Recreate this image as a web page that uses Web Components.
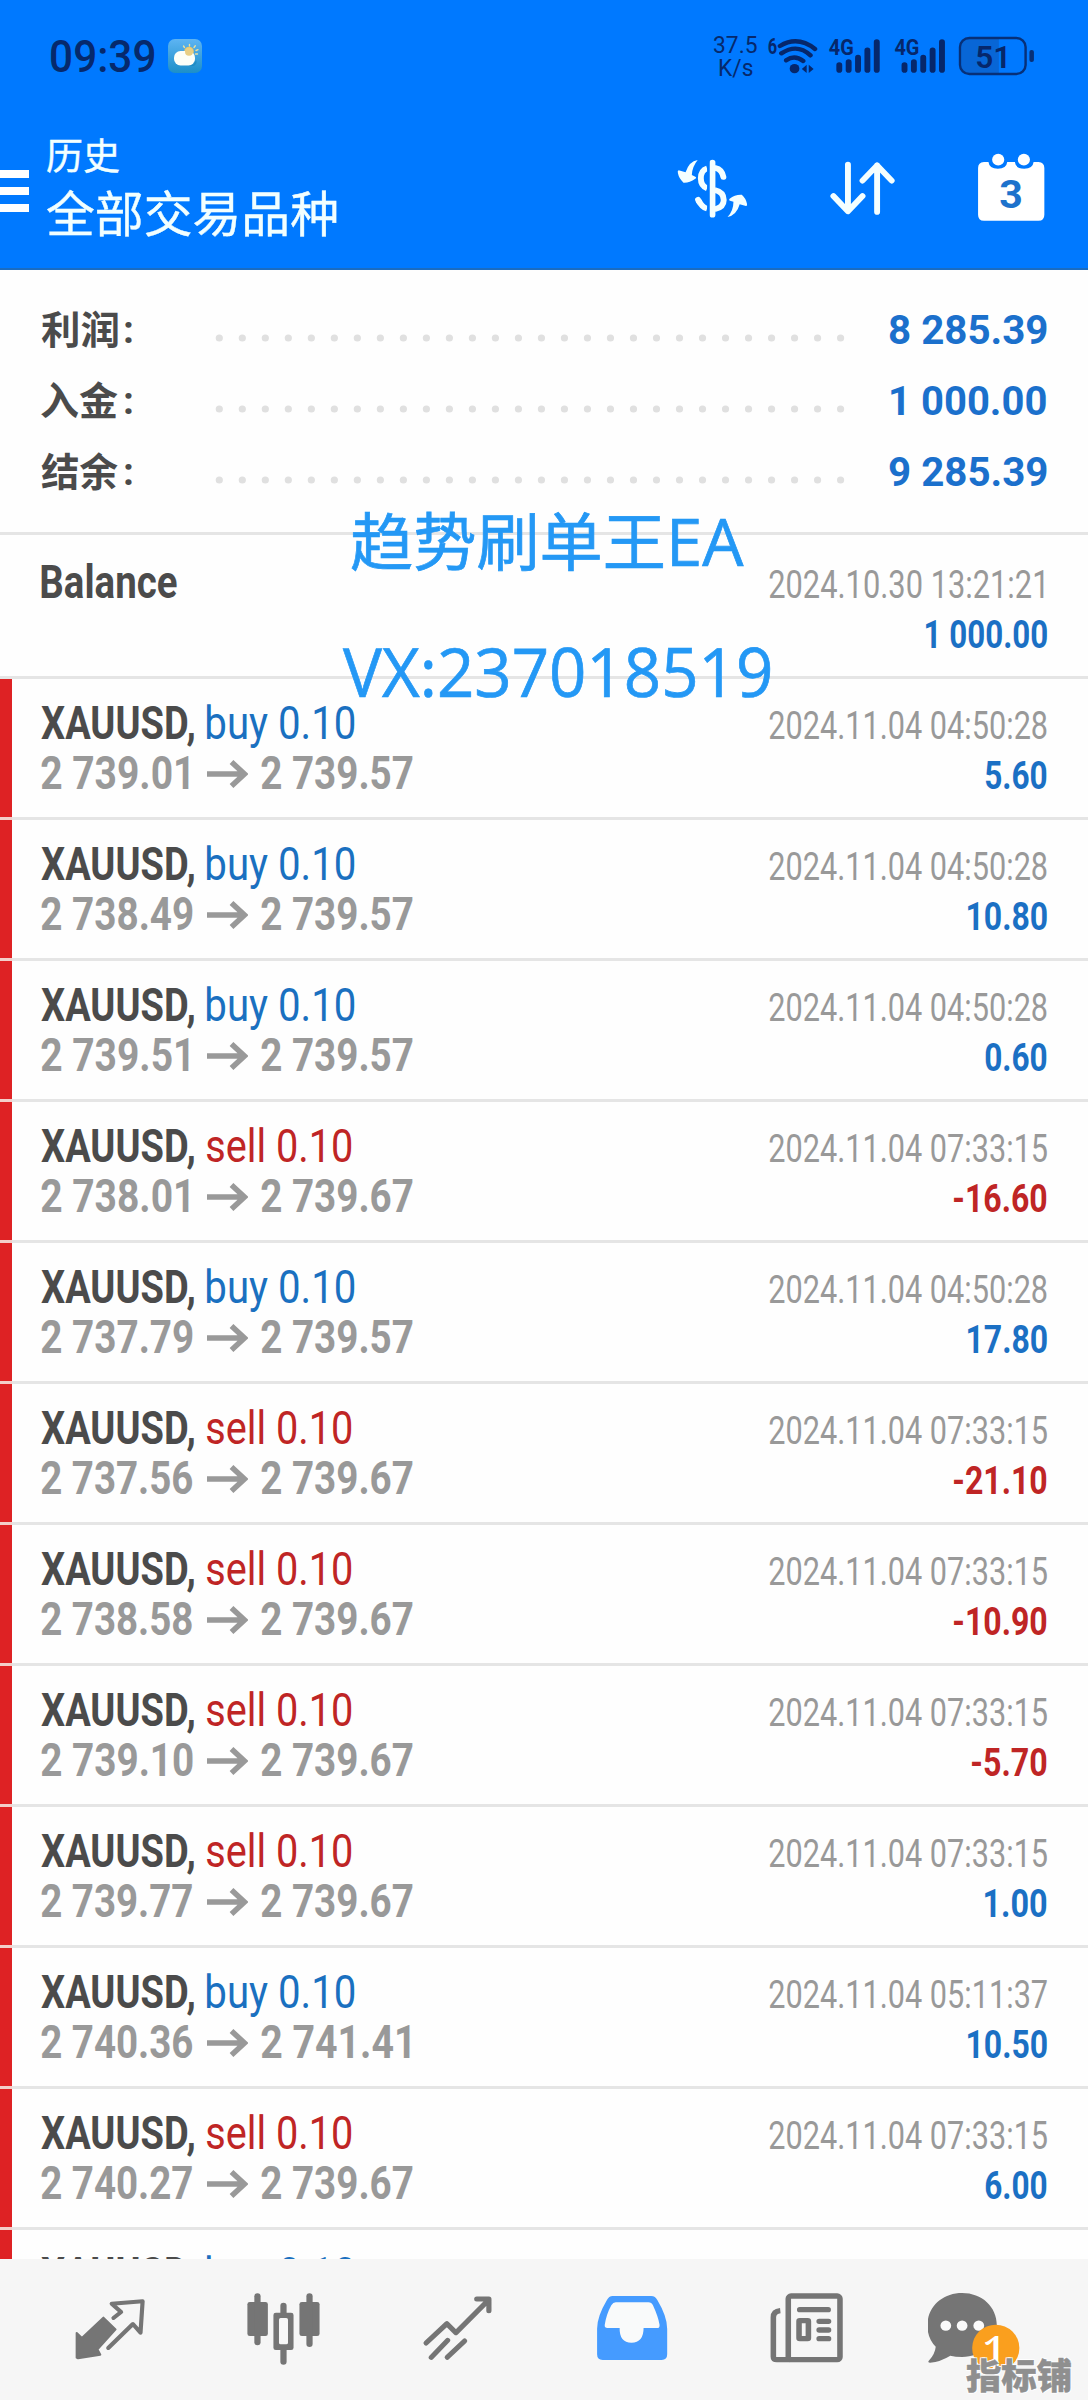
<!DOCTYPE html>
<html lang="zh-CN">
<head>
<meta charset="utf-8">
<title>历史</title>
<style>
html,body{margin:0;padding:0;background:#fff}
body{width:1088px;height:2400px;overflow:hidden;font-family:Roboto,"Noto Sans CJK SC",sans-serif}
</style>
</head>
<body>
<history-app></history-app>
<script>
const sheet = (css, html) => `<style>${css}</style>${html}`;
const pen = document.createElement('canvas').getContext('2d');

/* Text condensed or widened so that its ink spans exactly the given width. */
class FitText extends HTMLElement {
  connectedCallback() {
    const w = +this.getAttribute('w');
    const root = this.attachShadow({mode: 'open'});
    root.innerHTML = sheet(
      `:host{display:block;flex:none;width:${w}px;white-space:nowrap}
       span{display:inline-block;transform-origin:0 50%;white-space:pre}`,
      `<span></span>`);
    const span = root.querySelector('span');
    const text = this.getAttribute('text');
    span.textContent = text;
    const cs = getComputedStyle(this);
    pen.font = `${cs.fontWeight} ${cs.fontSize} ${cs.fontFamily}`;
    const m = pen.measureText(text);
    const ink = m.actualBoundingBoxLeft + m.actualBoundingBoxRight;
    const s = w / ink;
    span.style.transform = `translateX(${m.actualBoundingBoxLeft * s}px) scaleX(${s})`;
  }
}
customElements.define('fit-text', FitText);

const K = 2.882;
const tabBox = cx => [104, 90, `${(cx - 52) * K} 225 ${104 * K} 270`];
const ICONS = {
  menu: [29, 42, '0 0 29 42', '<path fill="#fff" d="M0 0h29v8H0zM0 17h29v8H0zM0 34h29v8H0z"/>'],
  weather: [34, 34, '0 0 34 34', `
    <defs><linearGradient id="g" x2="0" y2="1"><stop stop-color="#5db4f3"/><stop offset="1" stop-color="#1c8fc8"/></linearGradient></defs>
    <rect width="34" height="34" rx="7" fill="url(#g)"/>
    <g stroke="#e9dfa0" stroke-width="1.4" stroke-linecap="round"><path d="M16.500 8.500l-1-1.500M21.500 7V5.500M26 8.500l1.300-1.700M28 11.500l2-.8M27.500 15h2"/></g>
    <circle cx="21" cy="12.500" r="4.800" fill="#ecc866"/>
    <path fill="#1580b4" opacity=".5" d="M10 27h15a4 4 0 0 0 3-6l-3 5z"/>
    <rect x="6" y="12" width="21" height="14.500" rx="6.500" fill="#fcfff8"/>
    <circle cx="21" cy="12.800" r="4" fill="#e8cf85"/>`],
  status: [272, 46, '634 102 784 138', `
    <g fill="#06276b" font-family="Roboto" font-weight="700">
      <text x="645" y="161" font-size="66" textLength="27" lengthAdjust="spacingAndGlyphs">6</text>
      <text x="821" y="166" font-size="66" textLength="72" lengthAdjust="spacingAndGlyphs">4G</text>
      <text x="1010" y="166" font-size="66" textLength="72" lengthAdjust="spacingAndGlyphs">4G</text>
      <circle cx="722" cy="206" r="14"/>
      <path d="M757 194v25l-14-12zM763 194v25l14-12z"/>
    </g>
    <g fill="none" stroke="#06276b" stroke-width="13" stroke-linecap="round">
      <path d="M680 138Q731 106 781 147M684 160Q730 129 768 166M698 181Q722 163 747 183"/>
      <path stroke-width="17" d="M851 195v15M878 186v24M905 173v37M932 151v59M959 126v84"/>
      <path stroke-width="17" d="M1039 195v15M1066 186v24M1093 173v37M1120 151v59M1147 126v84"/>
    </g>
    <path fill="#0866d6" d="M1220 117h91v102h-91q-17 0-17-22v-58q0-22 17-22z"/>
    <rect x="1199" y="114" width="189" height="108" rx="27" fill="none" stroke="#073078" stroke-width="7"/>
    <rect x="1399" y="150" width="13" height="36" rx="6" fill="#073078"/>
    <text x="1243" y="203" fill="#06276b" font-family="Roboto" font-weight="600" font-size="96" textLength="104" lengthAdjust="spacingAndGlyphs">51</text>`],
  currency: [74, 74, `${132 * K} 450 ${74 * K} 222`, `
    <g fill="none" stroke="#f4ffff" stroke-width="17" stroke-linecap="round">
      <path d="M485.500 488v156"/>
      <path stroke-linecap="butt" d="M470 505Q452 511 452 535Q452 558 470 565"/>
      <path d="M494 504Q513 508 517 531"/>
      <path stroke-linecap="butt" d="M492 570Q518 576 518 600Q518 622 492 628"/>
      <path stroke-linecap="butt" d="M470 626Q455 621 446 602"/><path d="M444 599l3 6"/></g>
    <path fill="#0079ff" d="M470 480h7v172h-7z"/>
    <g fill="#f4ffff"><path d="M443 480Q418 484 408 517L388 511Q384 513 386 520Q389 536 402 548Q419 549 436 536Q441 532 436 530L426 525Q427 500 443 480z"/>
    <path d="M529 651Q555 646 564 613L582 618Q587 618 585 611Q582 595 570 584Q550 583 535 596Q531 600 536 602L546 605Q546 632 529 651z"/></g>`],
  sort: [68, 74, `${285 * K} 450 ${68 * K} 222`, `
    <path fill="none" stroke="#f4ffff" stroke-width="17" stroke-linecap="round" stroke-linejoin="round" d="M876 494v140M834 588l42 46 42-46M960 636V496M918 542l42-46 42 46"/>`],
  calendar: [72, 74, `${432 * K} 450 ${72 * K} 222`, `
    <path fill="#fff" d="M1268 486h13q2 20 27 20t27-20h22q2 20 27 20t27-20h14q17 2 17 18v140q0 18-17 18h-157q-17 0-17-18V504q0-16 17-18z"/>
    <circle cx="1309" cy="479" r="17.500" fill="#fff"/><circle cx="1383" cy="479" r="17.500" fill="#fff"/>
    <text x="1312" y="625" fill="#1d72cc" font-family="Roboto" font-weight="700" font-size="118" textLength="68" lengthAdjust="spacingAndGlyphs">3</text>`],
  arrow: [41, 28, '0 0 41 28', '<path fill="none" stroke="#999" stroke-width="5.500" d="M0 14h37M24.500 2L37.500 14 24.500 26"/>'],
  trade: [...tabBox(110), `
    <path fill="#757575" stroke="#757575" stroke-width="6" stroke-linejoin="round" d="M298 323L333 358 281 418 289 434 225 445 221 443 221 369 236 384z"/>
    <path fill="none" stroke="#757575" stroke-width="12" stroke-linecap="round" stroke-linejoin="round" d="M327 324L349 306 322 281 411 274 405 368 383 342 312 414"/>`],
  candles: [...tabBox(284), `
    <g fill="#757575"><rect x="713" y="276" width="59" height="102" rx="7"/><rect x="863" y="276" width="58" height="102" rx="7"/>
    <rect x="733" y="250" width="18" height="156" rx="9"/><rect x="883" y="250" width="18" height="161" rx="9"/>
    <rect x="808" y="278" width="18" height="50" rx="9"/><rect x="808" y="400" width="18" height="64" rx="9"/>
    <rect x="788" y="308" width="58" height="112" rx="7"/></g><rect x="804" y="324" width="26" height="79" rx="5" fill="#f7f7f7"/>`],
  trend: [...tabBox(458), `
    <path fill="none" stroke="#757575" stroke-width="15" stroke-linecap="round" stroke-linejoin="round" d="M1228 399L1288 341 1314 368 1408 270M1374 267H1409V302"/>
    <path fill="none" stroke="#757575" stroke-width="15" stroke-linecap="round" d="M1243 442L1290 391M1289 442L1339 393"/>`],
  inbox: [...tabBox(632 - 544), `
    <path fill="#459bff" d="M198 258H309Q321 258 327 271Q355 320 355 356V433Q355 450 339 450H169Q153 450 153 433V356Q153 320 181 271Q187 258 198 258z"/>
    <path fill="#f9fafa" d="M207 277H301Q310 277 314 286Q329 320 333 344Q334 354 326 354H287Q287 398 252 398T218 354H183Q174 354 175 345Q180 312 194 286Q199 277 207 277z"/>`],
  news: [...tabBox(806 - 544), `
    <g fill="none" stroke="#757575" stroke-width="16" stroke-linecap="round" stroke-linejoin="round">
    <rect x="704" y="258" width="149" height="191" rx="8"/>
    <path stroke-linecap="butt" d="M681 302Q661 304 661 322V440Q661 449 671 449H710"/>
    <path d="M737 299H819M793 334H820M793 360H820M793 386H820"/>
    <rect x="735" y="332" width="27" height="54" rx="2"/></g>`],
  chat: [...tabBox(980 - 544), `
    <path fill="#757575" d="M1205 249C1262 249 1305 290 1305 346S1262 441 1205 441Q1185 441 1171 437Q1143 455 1113 458Q1105 458 1109 452Q1127 432 1129 410Q1105 385 1105 346C1105 290 1148 249 1205 249z"/>
    <circle cx="1158" cy="347" r="15.500" fill="#fafafa"/><circle cx="1205" cy="347" r="15.500" fill="#fafafa"/><circle cx="1253" cy="347" r="15.500" fill="#fafafa"/>
    <ellipse cx="1302" cy="414" rx="68" ry="70" fill="#fa9f1e"/>
    <text x="1262" y="484" fill="#fff" font-family="Noto Serif,Liberation Serif" font-size="146" textLength="76" lengthAdjust="spacingAndGlyphs">1</text>`],
};

class GlyphIcon extends HTMLElement {
  connectedCallback() {
    const [w, h, vb, body] = ICONS[this.getAttribute('name')];
    this.attachShadow({mode: 'open'}).innerHTML = sheet(
      `:host{display:block;flex:none;width:${w}px;height:${h}px}svg{display:block}`,
      `<svg width="${w}" height="${h}" viewBox="${vb}" preserveAspectRatio="none">${body}</svg>`);
  }
}
customElements.define('glyph-icon', GlyphIcon);

class AppHeader extends HTMLElement {
  connectedCallback() {
    this.attachShadow({mode: 'open'}).innerHTML = sheet(`
      :host{display:block;box-sizing:border-box;height:270px;background:#0079ff;border-bottom:2px solid #1b6cc0}
      .status{display:flex;align-items:center;height:114px;padding:0 52px 0 51px;color:#06296c}
      .time{font-size:45px;font-weight:500;line-height:46px}
      .status .w{margin-left:14px;margin-top:-2px}
      .speed{margin-left:auto;font-size:24px;line-height:23px;display:flex;flex-direction:column;align-items:center;margin-right:7px}
      .bar{display:flex;height:154px}
      .menu{margin-top:56px}
      .titles{display:flex;flex-direction:column;margin-left:18px;color:#f2ffff;font-family:"Noto Sans CJK SC",sans-serif;-webkit-text-stroke:.4px #f2ffff}
      .t1{font-size:37px;line-height:44px;margin-top:18px}
      .t2{font-size:49px;line-height:60px;margin-top:5px}
      .tools{display:flex;margin:36px 40px 0 auto}
      .tools :nth-child(2){margin-left:79px}.tools :nth-child(3){margin-left:79px}
    `, `
      <div class="status"><fit-text class="time" w="103" text="09:39"></fit-text><glyph-icon class="w" name="weather"></glyph-icon>
        <div class="speed"><fit-text w="43" text="37.5"></fit-text><fit-text w="34" text="K/s"></fit-text></div>
        <glyph-icon name="status"></glyph-icon></div>
      <div class="bar"><glyph-icon class="menu" name="menu"></glyph-icon>
        <div class="titles"><fit-text class="t1" w="72" text="历史"></fit-text><fit-text class="t2" w="289" text="全部交易品种"></fit-text></div>
        <div class="tools"><glyph-icon name="currency"></glyph-icon><glyph-icon name="sort"></glyph-icon><glyph-icon name="calendar"></glyph-icon></div></div>`);
  }
}
customElements.define('app-header', AppHeader);

class SummaryLine extends HTMLElement {
  connectedCallback() {
    let dots = '';
    for (let i = 0; i < 28; i++) dots += `<circle cx="${4.300 + i * 23.010}" cy="4" r="3.600"/>`;
    this.attachShadow({mode: 'open'}).innerHTML = sheet(`
      :host{display:flex;height:71px;padding:0 41.500px 0 41px;align-items:center}
      .l{font:700 39px/71px "Noto Sans CJK SC",sans-serif;color:#4b4b4b;margin-top:-4px}
      .c{font:700 39px/71px Roboto;color:#4b4b4b;margin-left:7px;margin-top:2px}
      svg{display:block;margin-left:83px;margin-top:17px;flex:none}
      .v{margin-left:auto;font:700 40px/71px Roboto;color:#1b70cc;margin-top:1px}
    `, `<fit-text class="l" w="77" text="${this.getAttribute('label')}"></fit-text><fit-text class="c" w="7" text=":"></fit-text>
      <svg width="630" height="8" fill="#e0e0e0">${dots}</svg>
      <fit-text class="v" w="${this.getAttribute('vw')}" text="${this.getAttribute('value')}"></fit-text>`);
  }
}
customElements.define('summary-line', SummaryLine);

class DealRow extends HTMLElement {
  connectedCallback() {
    const a = n => this.getAttribute(n);
    const side = a('side');
    const amount = a('amount');
    const width = {4: 62, 5: amount[0] === '-' ? 75 : 79.5, 6: 93, 8: 121.5}[amount.length];
    /* A trailing "1" leaves its side bearing empty, so the ink ends earlier. */
    const one = s => s.endsWith('1');
    const left = side ? `
      <div class="l1"><fit-text class="sym" w="153" text="XAUUSD,"></fit-text><fit-text class="${side}" w="${side === 'buy' ? 147 : 144}" text="${side} 0.10"></fit-text></div>
      <div class="l2"><div class="from"><fit-text w="${one(a('from')) ? 147.5 : 151.5}" text="${a('from')}"></fit-text></div><glyph-icon name="arrow"></glyph-icon><fit-text w="${one(a('to')) ? 148.5 : 152}" text="${a('to')}"></fit-text></div>`
      : `<div class="l1"><fit-text class="sym" w="136" text="Balance"></fit-text></div>`;
    this.attachShadow({mode: 'open'}).innerHTML = sheet(`
      :host{display:block;flex:none}
      .row{display:flex;height:${side ? 138 : 141}px;box-sizing:border-box;padding:0 41px 0 0}
      .mark{width:12px;flex:none;background:${side ? '#de2224' : 'none'}}
      .left{padding:${side ? 20 : 23}px 0 0 29px}
      .right{margin-left:auto;padding-top:${side ? 22 : 25}px;display:flex;flex-direction:column;align-items:flex-end;font-size:38px;line-height:50px}
      .l1,.l2{display:flex;height:50px;font-size:45.500px;line-height:50px;align-items:center}
      .l1{gap:13px}.l2{color:#999;font-weight:700}
      .from{width:166px}.l2 glyph-icon{margin-right:13px}
      .sym{font-weight:700;color:#4b4b4b}
      .buy,.sell{font-weight:450}
      .buy{color:#1a70c0}.sell{color:#bf2525}
      .date{color:#999}.date.one{margin-right:3.500px}
      .amt{font-weight:700;color:${amount[0] === '-' ? '#bf2525' : '#1b70c4'}}
      .line{height:3px;background:${side ? 'linear-gradient(90deg,#f3cfca 12px,#e5e5e5 12px)' : '#e5e5e5'}}
    `, `<div class="row"><div class="mark"></div><div class="left">${left}</div>
      <div class="right"><fit-text class="date ${one(a('date')) ? 'one' : ''}" w="${one(a('date')) ? 274.5 : 278}" text="${a('date')}"></fit-text><fit-text class="amt" w="${width}" text="${amount}"></fit-text></div></div><div class="line"></div>`);
  }
}
customElements.define('deal-row', DealRow);

class TabBar extends HTMLElement {
  connectedCallback() {
    this.attachShadow({mode: 'open'}).innerHTML = sheet(`
      :host{display:flex;box-sizing:border-box;height:141px;background:#f6f6f6;padding:26px 21px 0 23px}
      div{width:174px;flex:none;display:flex;justify-content:center}
    `, ['trade', 'candles', 'trend', 'inbox', 'news', 'chat'].map(n => `<div><glyph-icon name="${n}"></glyph-icon></div>`).join(''));
  }
}
customElements.define('tab-bar', TabBar);

const DEALS = [
  ['buy', '2 739.01', '2 739.57', '04:50:28', '5.60'],
  ['buy', '2 738.49', '2 739.57', '04:50:28', '10.80'],
  ['buy', '2 739.51', '2 739.57', '04:50:28', '0.60'],
  ['sell', '2 738.01', '2 739.67', '07:33:15', '-16.60'],
  ['buy', '2 737.79', '2 739.57', '04:50:28', '17.80'],
  ['sell', '2 737.56', '2 739.67', '07:33:15', '-21.10'],
  ['sell', '2 738.58', '2 739.67', '07:33:15', '-10.90'],
  ['sell', '2 739.10', '2 739.67', '07:33:15', '-5.70'],
  ['sell', '2 739.77', '2 739.67', '07:33:15', '1.00'],
  ['buy', '2 740.36', '2 741.41', '05:11:37', '10.50'],
  ['sell', '2 740.27', '2 739.67', '07:33:15', '6.00'],
];

class HistoryApp extends HTMLElement {
  connectedCallback() {
    this.attachShadow({mode: 'open'}).innerHTML = sheet(`
      :host{display:flex;flex-direction:column;position:relative;width:1088px;height:2400px;overflow:hidden;background:#fefefe}
      app-header,.sum,tab-bar{flex:none}
      .sum{box-sizing:border-box;padding-top:24px;border-bottom:3px solid #e5e5e5;height:265px}
      .list{flex:1;min-height:0;overflow:hidden}
      .peek{display:flex;height:29px;overflow:hidden}
      .peek i{width:12px;background:#de2224}
      .peek div{display:flex;gap:13px;padding:20px 0 0 29px;font-size:45.500px;line-height:50px}
      .sym{font-weight:700;color:#4b4b4b}.buy{color:#1a70c0}
      .wm{position:absolute;color:#2498f5;-webkit-text-stroke:.7px #2498f5}
      .a{left:351px;top:496px;display:flex;gap:9px;font:400 63px/84px "Noto Sans CJK SC",sans-serif}
      .a .ea{font:400 66.500px/84px "Open Sans",sans-serif;margin-top:2px}
      .b{left:343px;top:629px;font:400 68px/84px "Open Sans",sans-serif}
      .c{left:966px;top:2350px;font:900 35px/48px "Noto Sans CJK SC",sans-serif;color:#8f8f8f;-webkit-text-stroke:.5px #8f8f8f;text-shadow:1px 1px 0 #fff,-1px -1px 0 #fff,1px -1px 0 #fff,-1px 1px 0 #fff}
    `, `<app-header></app-header>
      <div class="sum"><summary-line label="利润" value="8 285.39" vw="157.500"></summary-line><summary-line label="入金" value="1 000.00" vw="155.500"></summary-line><summary-line label="结余" value="9 285.39" vw="157.500"></summary-line></div>
      <div class="list"><deal-row date="2024.10.30 13:21:21" amount="1 000.00"></deal-row>
      ${DEALS.map(d => `<deal-row side="${d[0]}" from="${d[1]}" to="${d[2]}" date="2024.11.04 ${d[3]}" amount="${d[4]}"></deal-row>`).join('')}
      <div class="peek"><i></i><div><fit-text class="sym" w="153" text="XAUUSD,"></fit-text><fit-text class="buy" w="147" text="buy 0.10"></fit-text></div></div></div>
      <tab-bar></tab-bar>
      <div class="wm a"><fit-text w="312" text="趋势刷单王"></fit-text><fit-text class="ea" w="71.500" text="EA"></fit-text></div>
      <fit-text class="wm b" w="427.500" text="VX:237018519"></fit-text>
      <fit-text class="wm c" w="105" text="指标铺"></fit-text>`);
  }
}
customElements.define('history-app', HistoryApp);
</script>
</body>
</html>
